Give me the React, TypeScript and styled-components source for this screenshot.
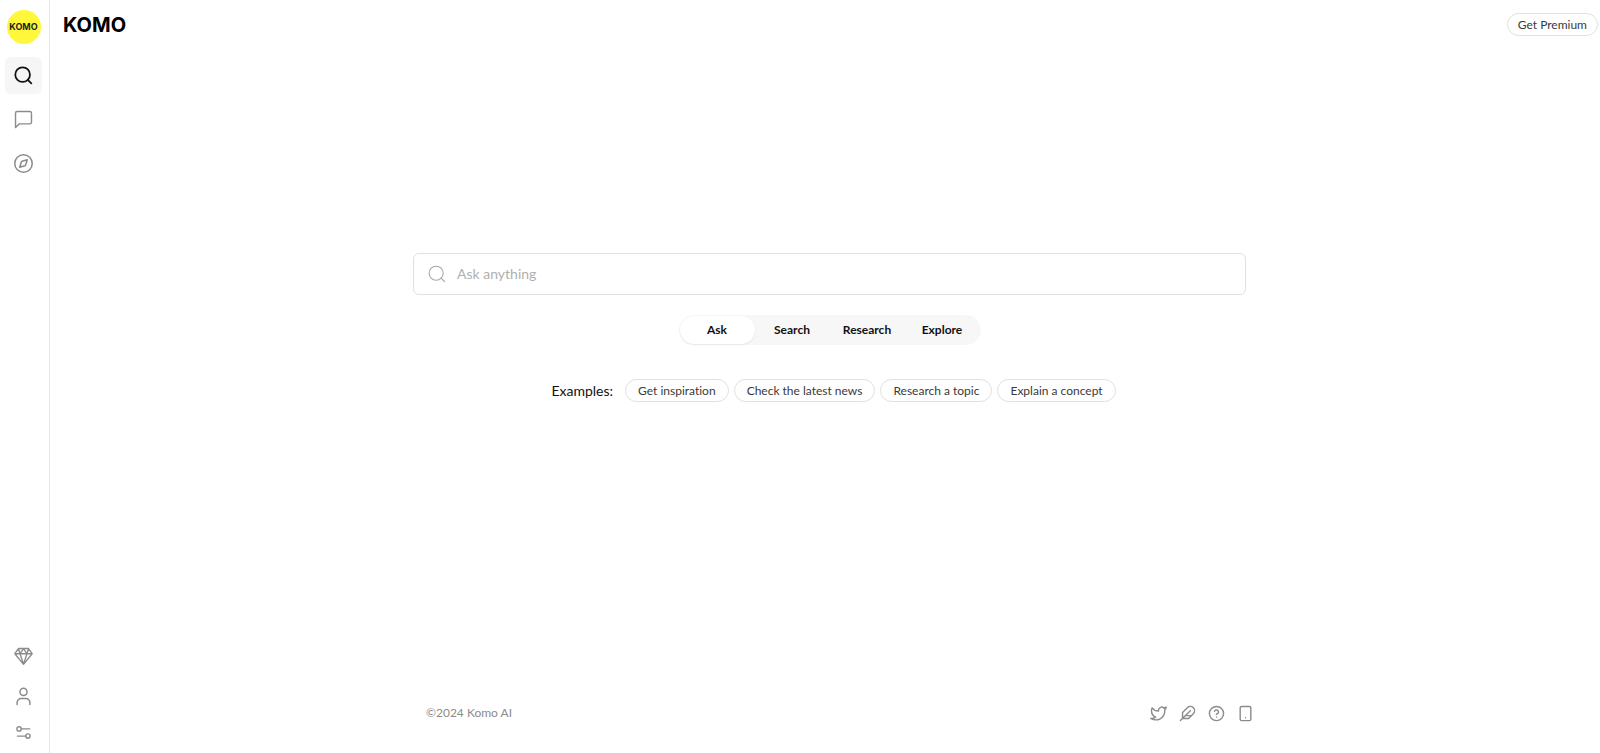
import React from 'react';
import styled, { createGlobalStyle } from 'styled-components';

const Global = createGlobalStyle`
  *, *::before, *::after { box-sizing: border-box; }
  body {
    margin: 0;
    background: #fff;
    color: #111;
    font-family: Lato, sans-serif;
    font-variant-ligatures: none;
  }
  button, input { font: inherit; color: inherit; }
  a { color: inherit; text-decoration: none; }
`;

const Page = styled.div`
  display: flex;
  min-height: 100vh;
`;

const Sidebar = styled.aside`
  display: flex;
  flex-direction: column;
  align-items: center;
  flex: 0 0 50px;
  padding: 10px 2px 6px 0;
  border-right: 1px solid #e6e6e6;
`;

const Logo = styled.a`
  display: grid;
  place-items: center;
  width: 34px;
  height: 34px;
  margin-bottom: 13px;
  border-radius: 50%;
  background: #fff83a;
  color: #222;
  font: 700 9px/10px Inter, sans-serif;
`;

const Nav = styled.nav`
  display: flex;
  flex-direction: column;
  gap: 7px;
`;

const Account = styled.nav`
  display: flex;
  flex-direction: column;
  gap: 3px;
  margin-top: auto;
`;

const NavButton = styled.button<{ $active?: boolean; $short?: boolean }>`
  display: grid;
  place-items: center;
  width: 37px;
  height: ${(p) => (p.$short ? 29 : 37)}px;
  padding: 0;
  border: 0;
  border-radius: 6px;
  background: ${(p) => (p.$active ? '#f6f6f6' : 'transparent')};
  color: ${(p) => (p.$active ? '#111' : '#8c8c8c')};
`;

const Icon = styled.svg`
  display: block;
  fill: none;
  stroke: currentColor;
  stroke-linecap: round;
  stroke-linejoin: round;
`;

const Main = styled.div`
  display: flex;
  flex-direction: column;
  flex: 1;
  min-width: 0;
  padding-left: 9px;
`;

const Header = styled.header`
  display: flex;
  align-items: center;
  justify-content: space-between;
  height: 49px;
  padding: 0 2px 0 4px;
`;

const Brand = styled.h1`
  margin: 0;
  color: #000;
  font: 700 20px/24px Inter, sans-serif;
`;

const Pill = styled.button<{ $compact?: boolean }>`
  height: 23px;
  padding: 0 ${(p) => (p.$compact ? 10 : 12)}px;
  border: 1px solid #e0e0e0;
  border-radius: 12px;
  background: #fff;
  color: #3a3a3a;
  font-size: 12px;
  line-height: 20px;
  white-space: nowrap;
`;

const Center = styled.main`
  display: flex;
  flex: 1;
  flex-direction: column;
  align-items: center;
  padding-top: 204px;
`;

const SearchBox = styled.label`
  display: flex;
  align-items: center;
  gap: 10px;
  width: 100%;
  max-width: 833px;
  height: 42px;
  padding: 0 13px;
  border: 1px solid #e0e0e0;
  border-radius: 6px;
  color: #a6a6a6;
`;

const SearchInput = styled.input`
  flex: 1;
  min-width: 0;
  padding: 0;
  border: 0;
  outline: 0;
  background: none;
  color: #222;
  font-size: 14px;
  line-height: 20px;
  &::placeholder { color: #b0b0b0; opacity: 1; }
`;

const Modes = styled.div`
  display: flex;
  height: 30px;
  margin-top: 20px;
  padding: 1px;
  border-radius: 15px;
  background: #f7f7f7;
`;

const Mode = styled.button<{ $active?: boolean }>`
  width: 75px;
  padding: 0;
  border: 0;
  border-radius: 14px;
  background: ${(p) => (p.$active ? '#fff' : 'transparent')};
  box-shadow: ${(p) => (p.$active ? '0 1px 2px rgba(0, 0, 0, 0.08)' : 'none')};
  color: #111;
  font-size: 12px;
  font-weight: 700;
  line-height: 16px;
`;

const Examples = styled.div`
  display: flex;
  align-items: center;
  gap: 5px;
  margin-top: 34px;
  padding-left: 8px;
`;

const ExamplesLabel = styled.span`
  margin-right: 7px;
  font-size: 14px;
  line-height: 20px;
`;

const Footer = styled.footer`
  display: flex;
  align-items: center;
  justify-content: space-between;
  width: 100%;
  max-width: 849px;
  margin: 0 auto;
  padding: 0 0 31px 21px;
  color: #8c8c8c;
  font-size: 12px;
  line-height: 18px;
`;

const Social = styled.nav`
  display: flex;
  gap: 12px;
`;

type IconProps = { size: number; stroke?: number };

const SearchIcon = ({ size, stroke = 2 }: IconProps) => (
  <Icon width={size} height={size} viewBox="0 0 24 24" strokeWidth={stroke}>
    <circle cx="11" cy="11" r="8.4" />
    <path d="m21 21-4.1-4.1" />
  </Icon>
);

const ChatIcon = () => (
  <Icon width="21" height="21" viewBox="0 0 25 25" strokeWidth="1.7">
    <path d="M22 15.7a2 2 0 0 1-2 2H7.5L3 22V5a2 2 0 0 1 2-2h15a2 2 0 0 1 2 2z" />
  </Icon>
);

const CompassIcon = () => (
  <Icon width="21" height="21" viewBox="0 0 25 25" strokeWidth="1.8">
    <circle cx="12.5" cy="12.5" r="10.4" />
    <path d="M17 8l-2 6.4q-.2.6-.8.8L8 17l2-6.4q.2-.6.8-.8z" />
  </Icon>
);

const DiamondIcon = () => (
  <Icon width="21" height="21" viewBox="0 0 25 25" strokeWidth="1.6">
    <path d="M6.5 3h12l4.3 6.2-10.3 12.6L2.2 9.2zM2.2 9.2h20.6M8.4 9.2l4.1 12.6 4.1-12.6M6.5 3l1.9 6.2L12.5 3l4.1 6.2L18.5 3" />
  </Icon>
);

const UserIcon = () => (
  <Icon width="21" height="21" viewBox="0 0 25 25" strokeWidth="1.8">
    <circle cx="12.5" cy="7" r="4.2" />
    <path d="M4.9 22v-2.3a4.8 4.8 0 0 1 4.8-4.8h5.6a4.8 4.8 0 0 1 4.8 4.8V22" />
  </Icon>
);

const SlidersIcon = () => (
  <Icon width="17" height="17" viewBox="0 0 25 25" strokeWidth="2">
    <circle cx="6" cy="7.2" r="3.2" />
    <path d="M9.2 7.2h12.4M3.6 17.8h12.2" />
    <circle cx="19" cy="17.8" r="3.2" />
  </Icon>
);

const TwitterIcon = () => (
  <Icon width="17" height="17" viewBox="0 0 24 24" strokeWidth="2">
    <path d="M23 3a10.9 10.9 0 0 1-3.14 1.53 4.48 4.48 0 0 0-7.86 3v1A10.66 10.66 0 0 1 3 4s-4 9 5 13a11.64 11.64 0 0 1-7 2c9 5 20 0 20-11.5a4.5 4.5 0 0 0-.08-.83A7.72 7.72 0 0 0 23 3z" />
  </Icon>
);

const FeatherIcon = () => (
  <Icon width="17" height="17" viewBox="0 0 24 24" strokeWidth="2">
    <path d="M20.24 12.24a6 6 0 0 0-8.49-8.49L5 10.5V19h8.5zM16 8 2 22M17.5 15H9" />
  </Icon>
);

const HelpIcon = () => (
  <Icon width="17" height="17" viewBox="0 0 24 24" strokeWidth="2">
    <circle cx="12" cy="12" r="10" />
    <path d="M9.09 9a3 3 0 0 1 5.83 1c0 2-3 3-3 3M12 17h.01" />
  </Icon>
);

const PhoneIcon = () => (
  <Icon width="17" height="17" viewBox="0 0 24 24" strokeWidth="2">
    <rect x="4.5" y="2" width="15" height="20" rx="2" />
    <path d="M12 18h.01" />
  </Icon>
);

const modes = ['Ask', 'Search', 'Research', 'Explore'];
const examples = ['Get inspiration', 'Check the latest news', 'Research a topic', 'Explain a concept'];

export default function App() {
  const [mode, setMode] = React.useState('Ask');
  return (
    <Page>
      <Global />
      <Sidebar>
        <Logo href="#">KOMO</Logo>
        <Nav>
          <NavButton $active aria-label="Search"><SearchIcon size={21} /></NavButton>
          <NavButton aria-label="Chat"><ChatIcon /></NavButton>
          <NavButton aria-label="Explore"><CompassIcon /></NavButton>
        </Nav>
        <Account>
          <NavButton aria-label="Premium"><DiamondIcon /></NavButton>
          <NavButton aria-label="Account"><UserIcon /></NavButton>
          <NavButton aria-label="Settings" $short><SlidersIcon /></NavButton>
        </Account>
      </Sidebar>
      <Main>
        <Header>
          <Brand>KOMO</Brand>
          <Pill $compact>Get Premium</Pill>
        </Header>
        <Center>
          <SearchBox>
            <SearchIcon size={20} stroke={1.3} />
            <SearchInput placeholder="Ask anything" aria-label="Ask anything" />
          </SearchBox>
          <Modes>
            {modes.map((m) => (
              <Mode key={m} $active={m === mode} onClick={() => setMode(m)}>{m}</Mode>
            ))}
          </Modes>
          <Examples>
            <ExamplesLabel>Examples:</ExamplesLabel>
            {examples.map((e) => <Pill key={e}>{e}</Pill>)}
          </Examples>
        </Center>
        <Footer>
          <span>©2024 Komo AI</span>
          <Social>
            <a href="#" aria-label="Twitter"><TwitterIcon /></a>
            <a href="#" aria-label="Blog"><FeatherIcon /></a>
            <a href="#" aria-label="Help"><HelpIcon /></a>
            <a href="#" aria-label="Mobile app"><PhoneIcon /></a>
          </Social>
        </Footer>
      </Main>
    </Page>
  );
}
